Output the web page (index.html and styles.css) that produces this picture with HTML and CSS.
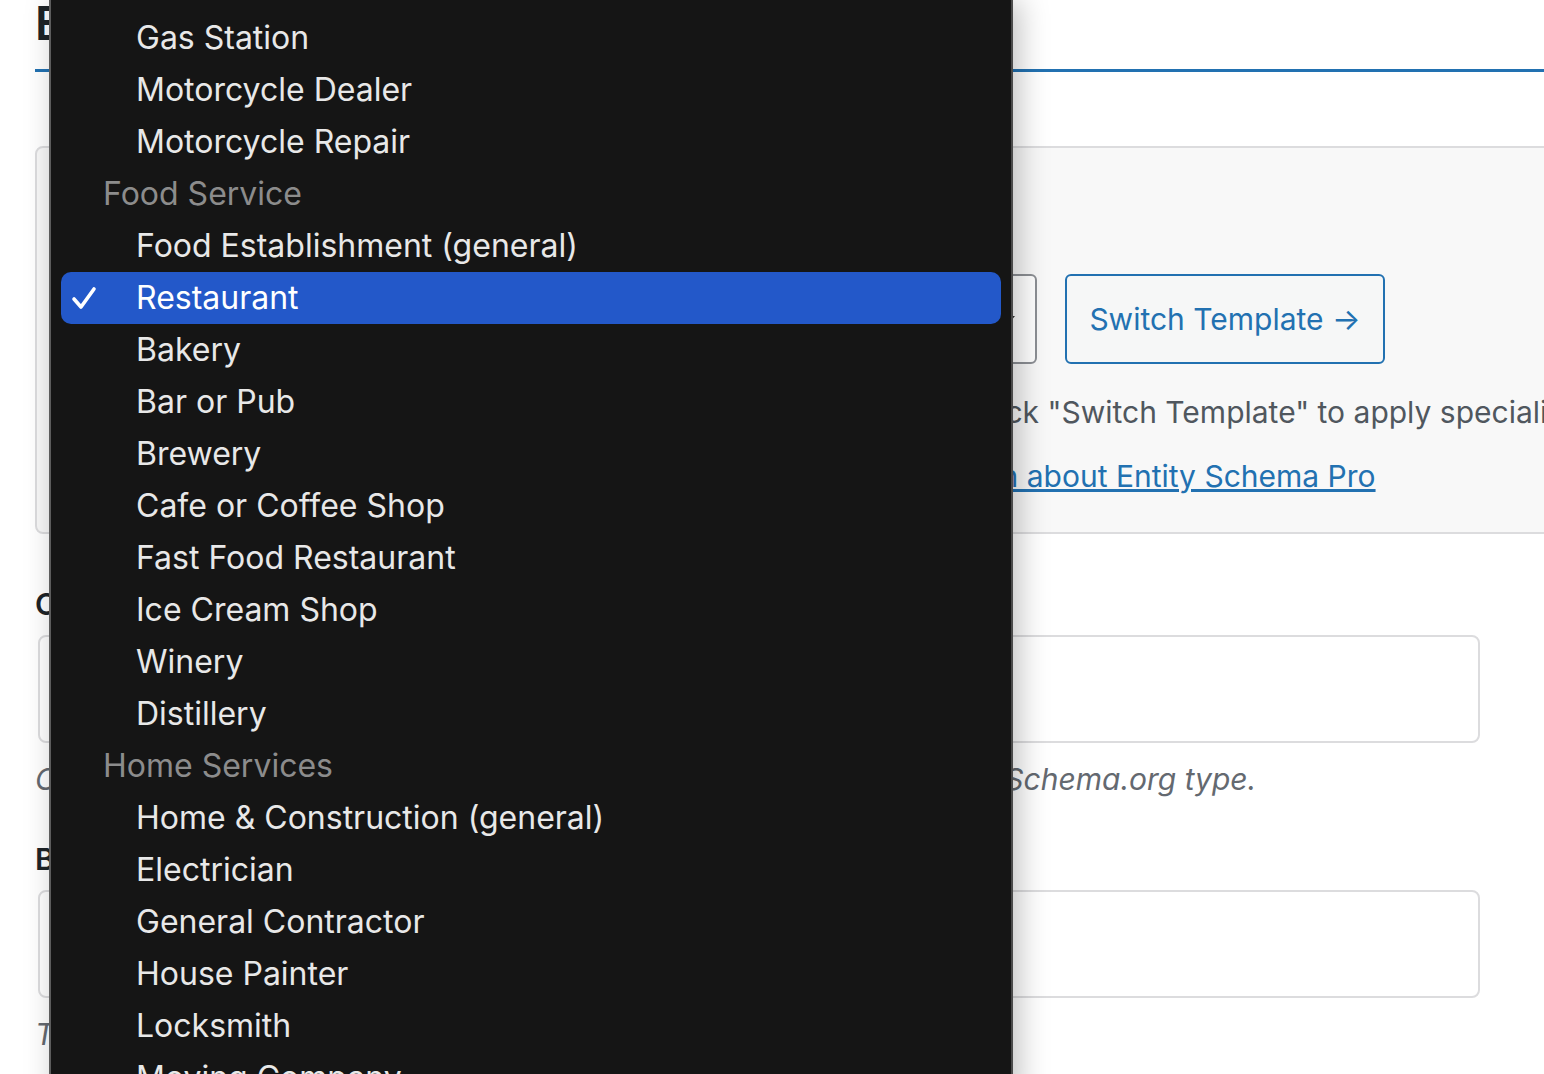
FILE: index.html
```html
<!DOCTYPE html>
<html lang="en">
<head>
    <meta charset="UTF-8">
    <meta name="viewport" content="width=device-width, initial-scale=1.0">
    <title>Entity Schema</title>
    <link rel="stylesheet" href="styles.css">
</head>
<body>
    <div class="page">
        <h1 class="title">Entity Schema</h1>
        <div class="tabline"></div>

        <div class="card">
            <h2 class="card-title">Business Template</h2>
            <div class="card-row">
                <div class="select">Restaurant<span class="caret"></span></div>
                <button class="switch-btn">Switch Template &rarr;</button>
            </div>
            <p class="card-note">Choose the type of business that best describes you, and then click "Switch Template" to apply specialized fields.</p>
            <p class="card-link">Get more business templates, advanced fields, and support. <a href="#">Learn about Entity Schema Pro</a></p>
        </div>

        <div class="field">
            <label class="field-label">Custom Type</label>
            <div class="input"></div>
            <p class="help">Optional. Use this box to override this template with a more specific Schema.org type.</p>
        </div>

        <div class="field field-next">
            <label class="field-label">Business Name</label>
            <div class="input"></div>
            <p class="help">The name of your business as it should appear.</p>
        </div>
    </div>

    <ul class="menu">
        <li class="item">Gas Station</li>
        <li class="item">Motorcycle Dealer</li>
        <li class="item">Motorcycle Repair</li>
        <li class="group">Food Service</li>
        <li class="item">Food Establishment (general)</li>
        <li class="item selected">
            <svg class="check" viewBox="0 0 26 26" width="26" height="26"><path d="M3 14 L10 22 L23 4" fill="none" stroke="#fff" stroke-width="3.6" stroke-linecap="round" stroke-linejoin="round"/></svg>
            Restaurant
        </li>
        <li class="item">Bakery</li>
        <li class="item">Bar or Pub</li>
        <li class="item">Brewery</li>
        <li class="item">Cafe or Coffee Shop</li>
        <li class="item">Fast Food Restaurant</li>
        <li class="item">Ice Cream Shop</li>
        <li class="item">Winery</li>
        <li class="item">Distillery</li>
        <li class="group">Home Services</li>
        <li class="item">Home &amp; Construction (general)</li>
        <li class="item">Electrician</li>
        <li class="item">General Contractor</li>
        <li class="item">House Painter</li>
        <li class="item">Locksmith</li>
        <li class="item">Moving Company</li>
    </ul>
</body>
</html>
```

FILE: styles.css
```css
html, body {
    margin: 0;
    padding: 0;
    background: #fff;
    overflow: hidden;
    height: 1074px;
}
body {
    font-family: Inter, "Noto Sans", sans-serif;
    color: #1d2327;
}
.page {
    padding-left: 35px;
    width: 1600px;
}
.title {
    margin: 0;
    font-size: 46px;
    font-weight: 600;
    line-height: 46px;
    height: 69px;
}
.tabline {
    height: 3px;
    background: #2271b1;
}
.card {
    margin-top: 74px;
    background: #f8f8f8;
    border: 2px solid #dcdcde;
    border-radius: 8px;
    height: 388px;
    box-sizing: border-box;
    padding: 30px 40px;
}
.card-title {
    margin: 0;
    font-size: 30px;
    font-weight: 600;
    height: 96px;
}
.card-row {
    display: flex;
    gap: 28px;
}
.select {
    width: 960px;
    height: 90px;
    box-sizing: border-box;
    border: 2px solid #8c8f94;
    border-radius: 6px;
    background: #fff;
    position: relative;
    font-size: 30px;
    line-height: 86px;
    padding-left: 20px;
}
.caret {
    position: absolute;
    right: 20px;
    top: 40px;
    border-left: 6px solid transparent;
    border-right: 6px solid transparent;
    border-top: 7px solid #333;
}
.switch-btn {
    width: 320px;
    height: 90px;
    border: 2px solid #2271b1;
    border-radius: 6px;
    background: #f6f7f7;
    color: #2271b1;
    font-family: Inter, "Noto Sans", sans-serif;
    font-size: 30px;
}
.card-note {
    margin: 30px 0 0;
    font-size: 30px;
    color: #50575e;
    white-space: nowrap;
}
.card-link {
    margin: 28px 0 0;
    font-size: 30px;
    color: #50575e;
    white-space: nowrap;
}
.card-link a {
    color: #2271b1;
}
.field {
    margin-top: 52px;
}
.field-next {
    margin-top: 44px;
}
.field-label {
    display: block;
    font-size: 30px;
    font-weight: 600;
    height: 48px;
}
.input {
    width: 1442px;
    height: 108px;
    margin-left: 3px;
    margin-top: 1px;
    box-sizing: border-box;
    border: 2px solid #dcdcde;
    border-radius: 8px;
    background: #fff;
}
.help {
    margin: 18px 0 0;
    font-size: 30px;
    font-style: italic;
    color: #646970;
    white-space: nowrap;
}
.menu {
    position: absolute;
    left: 49px;
    top: 0;
    width: 964px;
    height: 1100px;
    margin: 0;
    padding: 12px 10px 0 10px;
    box-sizing: border-box;
    list-style: none;
    background: #151515;
    border-left: 2px solid #5c5c5c;
    border-right: 2px solid #4a4a4a;
    box-shadow: 6px 0 28px rgba(0, 0, 0, 0.25);
}
.menu li {
    height: 52px;
    line-height: 52px;
    font-size: 32px;
    white-space: nowrap;
    position: relative;
}
.item {
    color: #e8e8e8;
    padding-left: 75px;
}
.group {
    color: #8c8c8c;
    padding-left: 42px;
}
.selected {
    background: #2358c9;
    color: #fff;
    border-radius: 10px;
}
.check {
    position: absolute;
    left: 10px;
    top: 13px;
}
```
